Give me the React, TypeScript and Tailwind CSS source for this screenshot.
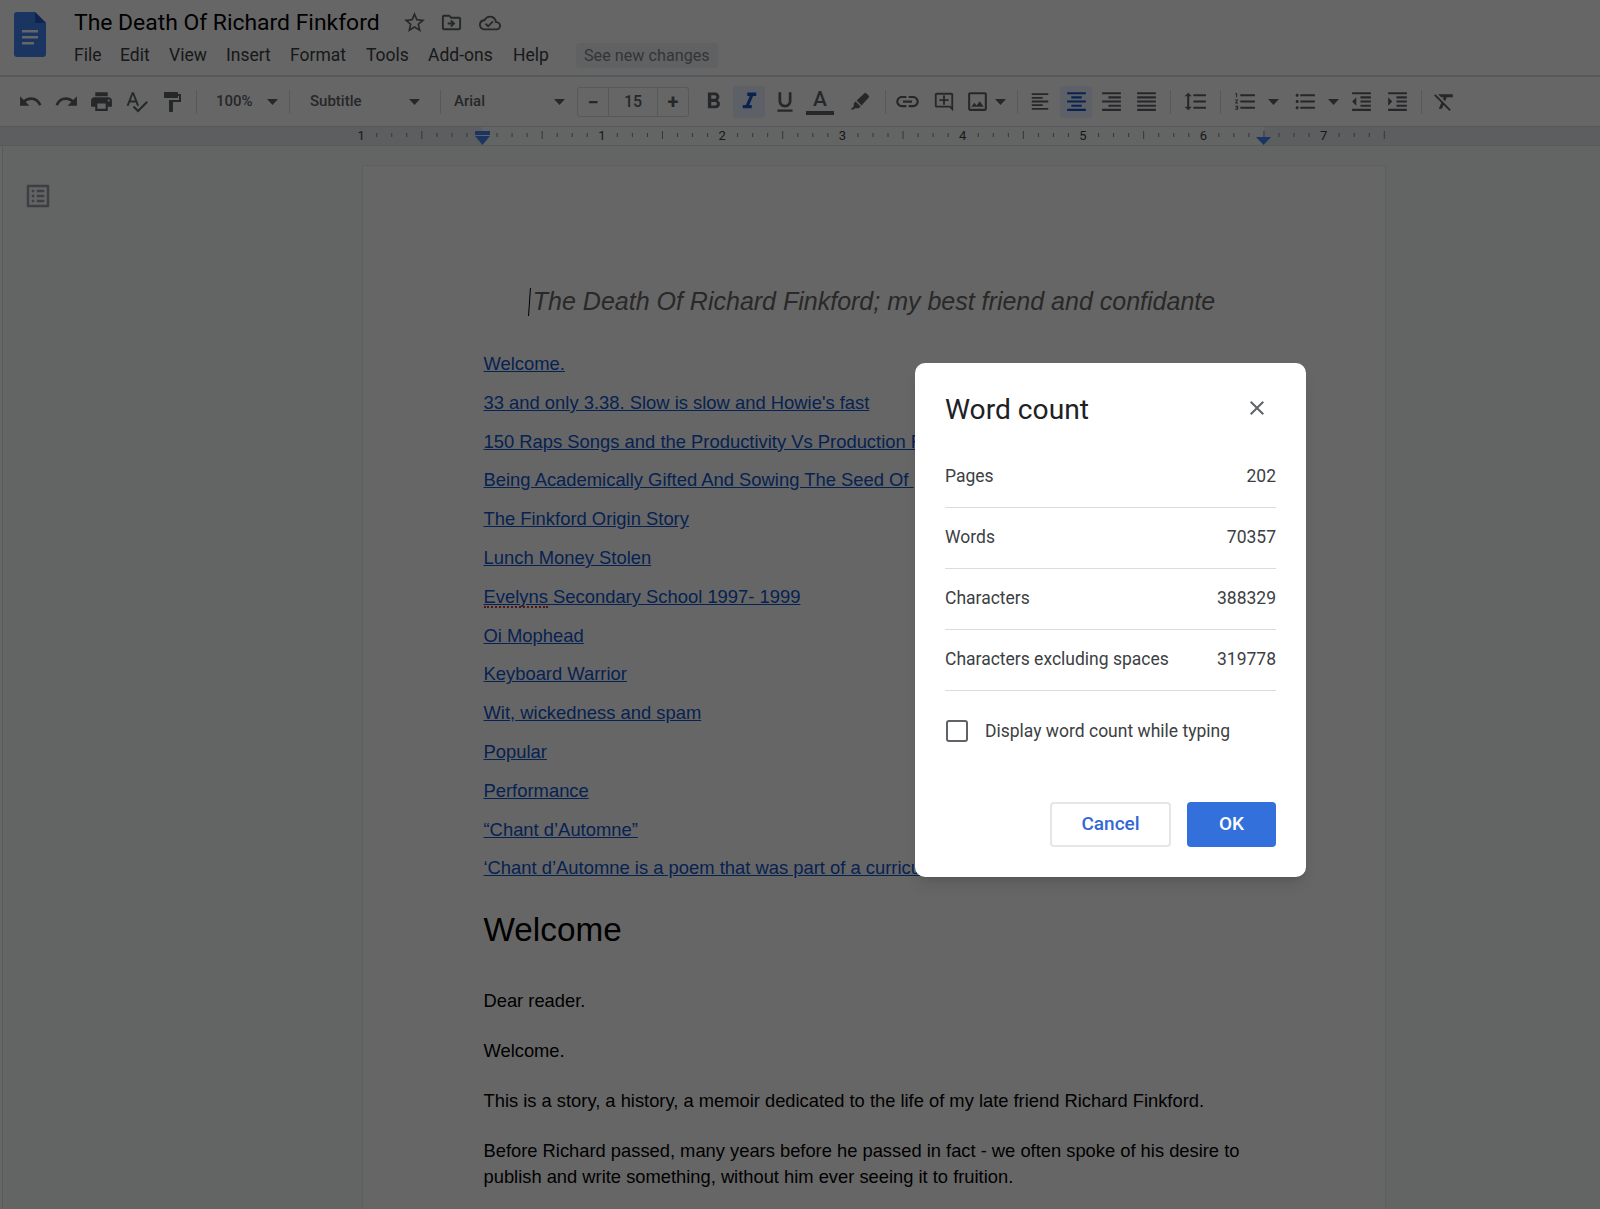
import React from "react";
import {
  MdUndo,
  MdRedo,
  MdPrint,
  MdSpellcheck,
  MdFormatPaint,
  MdFormatBold,
  MdFormatItalic,
  MdFormatUnderlined,
  MdLink,
  MdOutlineAddComment,
  MdOutlineImage,
  MdFormatAlignLeft,
  MdFormatAlignCenter,
  MdFormatAlignRight,
  MdFormatAlignJustify,
  MdFormatLineSpacing,
  MdFormatListNumbered,
  MdFormatListBulleted,
  MdFormatIndentDecrease,
  MdFormatIndentIncrease,
  MdFormatClear,
  MdStarBorder,
  MdOutlineDriveFileMove,
  MdOutlineCloudDone,
  MdOutlineListAlt,
  MdClose,
} from "react-icons/md";

const menus = [
  { label: "File", cls: "w-[46px]" },
  { label: "Edit", cls: "w-[49px]" },
  { label: "View", cls: "w-[57px]" },
  { label: "Insert", cls: "w-[64px]" },
  { label: "Format", cls: "w-[76px]" },
  { label: "Tools", cls: "w-[62px]" },
  { label: "Add-ons", cls: "w-[85px]" },
  { label: "Help", cls: "w-[62px]" },
];

const links = [
  "Welcome.",
  "33 and only 3.38. Slow is slow and Howie's fast",
  "150 Raps Songs and the Productivity Vs Production F",
  "Being Academically Gifted And Sowing The Seed Of\u00a0",
  "The Finkford Origin Story",
  "Lunch Money Stolen",
  "Evelyns Secondary School 1997- 1999",
  "Oi Mophead",
  "Keyboard Warrior",
  "Wit, wickedness and spam",
  "Popular",
  "Performance",
  "“Chant d’Automne”",
  "‘Chant d’Automne is a poem that was part of a curriculum",
];

const counts = [
  { label: "Pages", value: "202" },
  { label: "Words", value: "70357" },
  { label: "Characters", value: "388329" },
  { label: "Characters excluding spaces", value: "319778" },
];

const Slot = ({ className, children }: { className: string; children?: React.ReactNode }) => (
  <div className={`flex h-full shrink-0 items-center justify-center text-[#5f6368] ${className}`}>{children}</div>
);

const Caret = () => (
  <svg width="11" height="6" viewBox="0 0 11 6" className="shrink-0">
    <path d="M0 0h11L5.5 6z" fill="#5f6368" />
  </svg>
);

const Sep = ({ className }: { className: string }) => (
  <div className={`flex h-full shrink-0 items-center justify-center ${className}`}>
    <div className="h-[24px] w-px bg-[#dadce0]" />
  </div>
);

const Marker = () => (
  <svg width="24" height="24" viewBox="0 0 24 24" fill="#5f6368">
    <path d="M16.5 3.2a1.2 1.2 0 0 1 1.7 0l2.6 2.6a1.2 1.2 0 0 1 0 1.7l-7.3 7.9-4.9-4.9z" />
    <path d="M7.6 11.4l5 5-1.9 1.9H6.9l-1 1.2H2.6l3.2-3.3v-2.9z" />
  </svg>
);

const Ruler = () => {
  const inch = 120.3;
  const zero = 482;
  const labels = [-1, 1, 2, 3, 4, 5, 6, 7];
  const ticks: { x: number; long: boolean }[] = [];
  for (let i = -1; i < 8; i++) {
    for (let j = 1; j < 8; j++) {
      const x = zero + i * inch + (j * inch) / 8;
      if (x < 1386) ticks.push({ x, long: j === 4 });
    }
  }
  return (
    <svg width="1600" height="18" className="block">
      <rect x="0" y="0" width="1600" height="18" fill="#e8eaed" />
      <rect x="482" y="0" width="782" height="18" fill="#f8f9fa" />
      {ticks.map((t, i) => (
        <line key={i} x1={t.x} x2={t.x} y1={t.long ? 4 : 6} y2={t.long ? 12 : 10} stroke="#80868b" strokeWidth="1" />
      ))}
      {labels.map((n) => (
        <text
          key={n}
          x={zero + n * inch - 0.5}
          y="12.5"
          textAnchor="middle"
          fontSize="13"
          fontFamily="Roboto, sans-serif"
          fill="#3c4043"
        >
          {Math.abs(n)}
        </text>
      ))}
      <rect x="475" y="4" width="15" height="4" fill="#4285f4" />
      <path d="M475 9h15l-7.5 9z" fill="#4285f4" />
      <path d="M1256 10h15l-7.5 8z" fill="#4285f4" />
    </svg>
  );
};

const DocsLogo = () => (
  <svg width="32" height="45" viewBox="0 0 32 45">
    <path d="M3 0h18l11 11v31a3 3 0 0 1-3 3H3a3 3 0 0 1-3-3V3a3 3 0 0 1 3-3z" fill="#4285f4" />
    <path d="M21 0l11 11H21z" fill="#2a56c6" />
    <rect x="8" y="18" width="16" height="2.5" fill="#fff" />
    <rect x="8" y="24" width="16" height="2.5" fill="#fff" />
    <rect x="8" y="30" width="12" height="2.5" fill="#fff" />
  </svg>
);

const Header = () => (
  <div className="flex h-[75px] bg-white">
    <div className="w-[74px] shrink-0 pl-[14px] pt-[12px]">
      <DocsLogo />
    </div>
    <div className="flex flex-col">
      <div className="flex h-[45px] items-center">
        <span className="text-[22.9px] leading-[30px] text-black">The Death Of Richard Finkford</span>
        <div className="ml-[22px] flex items-center gap-[13px] text-[#5f6368]">
          <MdStarBorder size={25} />
          <MdOutlineDriveFileMove size={23} className="mr-[3px]" />
          <MdOutlineCloudDone size={22} />
        </div>
      </div>
      <div className="-mt-px flex h-[23px] items-center text-[17.5px] text-[#3c4043]">
        {menus.map((m) => (
          <span key={m.label} className={`block ${m.cls}`}>
            {m.label}
          </span>
        ))}
        <span className="ml-px rounded-[4px] bg-[#f1f3f4] px-[8px] py-[2px] text-[16.2px] leading-[21px] text-[#80868b]">
          See new changes
        </span>
      </div>
    </div>
  </div>
);

const Toolbar = () => (
  <div className="flex h-[49px] items-center bg-white pl-[12px]">
    <Slot className="w-[36px]"><MdUndo size={25} /></Slot>
    <Slot className="w-[36px]"><MdRedo size={25} /></Slot>
    <Slot className="w-[35px]"><MdPrint size={25} /></Slot>
    <Slot className="w-[35px]"><MdSpellcheck size={25} /></Slot>
    <Slot className="w-[35px]"><MdFormatPaint size={24} /></Slot>
    <Sep className="w-[14px]" />
    <div className="flex h-full w-[79px] shrink-0 items-center pl-[13px] text-[15px] font-medium text-[#5f6368]">
      <span className="w-[51px]">100%</span>
      <Caret />
    </div>
    <Sep className="w-[14px]" />
    <div className="flex h-full w-[137px] shrink-0 items-center pl-[14px] text-[15px] font-medium text-[#5f6368]">
      <span className="w-[99px]">Subtitle</span>
      <Caret />
    </div>
    <Sep className="w-[14px]" />
    <div className="flex h-full w-[124px] shrink-0 items-center pl-[7px] text-[15px] font-medium text-[#5f6368]">
      <span className="w-[100px]">Arial</span>
      <Caret />
    </div>
    <div className="ml-[6px] flex h-[30px] w-[112px] shrink-0 items-stretch rounded-[3px] border border-[#dadce0] text-[#5f6368]">
      <div className="flex w-[30px] items-center justify-center text-[20px] font-bold leading-none">−</div>
      <div className="flex flex-1 items-center justify-center border-x border-[#dadce0] text-[16px] font-medium">15</div>
      <div className="flex w-[30px] items-center justify-center text-[20px] font-bold leading-none">+</div>
    </div>
    <Slot className="ml-[6px] w-[37px]"><MdFormatBold size={27} /></Slot>
    <div className="ml-px flex h-[32px] w-[32px] shrink-0 items-center justify-center rounded-[3px] bg-[#e8f0fe] text-[#1a56c9]">
      <MdFormatItalic size={27} />
    </div>
    <Slot className="w-[40px]"><MdFormatUnderlined size={26} /></Slot>
    <Slot className="w-[30px]">
      <div className="flex flex-col items-center">
        <span className="text-[21px] font-medium leading-[23px]">A</span>
        <div className="h-[4px] w-[28px] bg-[#5f6368]" />
      </div>
    </Slot>
    <Slot className="w-[49px]"><Marker /></Slot>
    <Sep className="w-[2px]" />
    <Slot className="w-[42px]"><MdLink size={27} /></Slot>
    <Slot className="w-[32px]"><MdOutlineAddComment size={22} /></Slot>
    <Slot className="w-[35px]"><MdOutlineImage size={25} /></Slot>
    <Slot className="w-[10px]"><Caret /></Slot>
    <Sep className="w-[24px]" />
    <Slot className="w-[22px]"><MdFormatAlignLeft size={25} /></Slot>
    <div className="ml-[9px] flex h-[32px] w-[32px] shrink-0 items-center justify-center rounded-[3px] bg-[#e8f0fe] text-[#1a56c9]">
      <MdFormatAlignCenter size={25} />
    </div>
    <Slot className="w-[39px]"><MdFormatAlignRight size={25} /></Slot>
    <Slot className="w-[31px]"><MdFormatAlignJustify size={25} /></Slot>
    <Sep className="w-[16px]" />
    <Slot className="w-[34px]"><MdFormatLineSpacing size={25} /></Slot>
    <Sep className="w-[16px]" />
    <Slot className="w-[34px]"><MdFormatListNumbered size={25} /></Slot>
    <Slot className="w-[22px]"><Caret /></Slot>
    <Slot className="w-[42px]"><MdFormatListBulleted size={25} /></Slot>
    <Slot className="w-[14px]"><Caret /></Slot>
    <Slot className="w-[42px]"><MdFormatIndentDecrease size={25} /></Slot>
    <Slot className="w-[30px]"><MdFormatIndentIncrease size={25} /></Slot>
    <Sep className="w-[18px]" />
    <Slot className="w-[28px]"><MdFormatClear size={25} /></Slot>
  </div>
);

const DocPage = () => (
  <div className="h-[1100px] w-[1024px] shrink-0 border-x border-t border-[#ebebeb] bg-white pl-[120.5px] pr-[120.5px] pt-[115px] font-['Liberation_Sans',Arial,sans-serif]">
    <div className="h-[40px] whitespace-nowrap text-center text-[25px] italic leading-[40px] text-[#666666]">
      <span className="relative">
        <span className="absolute -left-[4px] top-[1px] h-[28px] w-px rotate-[4deg] bg-black" />
        The Death Of Richard Finkford; my best friend and confidante
      </span>
    </div>
    <div className="mt-[24px]">
      {links.map((text) => (
        <div key={text} className="h-[38.8px] whitespace-nowrap text-[18.4px] leading-[38.8px] text-[#1155cc] underline">
          {text.startsWith("Evelyns") ? (
            <>
              <span className="relative">
                Evelyns
                <span className="absolute bottom-[-1px] left-0 right-0 border-b-2 border-dotted border-[#d93025]" />
              </span>
              {text.slice(7)}
            </>
          ) : (
            text
          )}
        </div>
      ))}
    </div>
    <div className="mt-[17px] h-[50px] text-[33.3px] leading-[50px] text-black">Welcome</div>
    <div className="mt-[33px] flex flex-col gap-[24.5px] text-[18.33px] leading-[25.5px] text-black">
      <p>Dear reader.</p>
      <p>Welcome.</p>
      <p>This is a story, a history, a memoir dedicated to the life of my late friend Richard Finkford.</p>
      <p>
        Before Richard passed, many years before he passed in fact - we often spoke of his desire to publish and write
        something, without him ever seeing it to fruition.
      </p>
    </div>
  </div>
);

const WordCountDialog = () => (
  <div className="absolute left-[915px] top-[363px] flex h-[514px] w-[391px] flex-col rounded-[10px] bg-white px-[30px] shadow-lg">
    <div className="flex h-[84px] items-center justify-between pt-[11px]">
      <span className="text-[28.2px] leading-none text-[#202124]">Word count</span>
      <MdClose size={24} className="mr-[7px] mt-[-5px] text-[#5f6368]" />
    </div>
    {counts.map((row) => (
      <div
        key={row.label}
        className="flex h-[61px] items-center justify-between border-b border-[#dadce0] pb-[2px] text-[17.5px] text-[#3c4043] first:h-[62px]"
      >
        <span>{row.label}</span>
        <span>{row.value}</span>
      </div>
    ))}
    <div className="mt-[29px] flex h-[22px] items-center">
      <div className="ml-px h-[22px] w-[22px] rounded-[3px] border-2 border-[#5f6368]" />
      <span className="ml-[17px] text-[17.5px] text-[#3c4043]">Display word count while typing</span>
    </div>
    <div className="mt-[60px] flex justify-end gap-[16px]">
      <button className="h-[45px] w-[121px] rounded-[4px] border-2 border-[#e4e6e9] bg-white text-[19px] font-medium text-[#3367d6]">
        Cancel
      </button>
      <button className="h-[45px] w-[89px] rounded-[4px] bg-[#3370dc] text-[19px] font-medium text-white">OK</button>
    </div>
  </div>
);

export default function App() {
  return (
    <div className="relative h-screen w-full overflow-hidden bg-[#f8f9fa] font-['Roboto',sans-serif]">
      <Header />
      <div className="h-[2px] bg-[#dadce0]" />
      <Toolbar />
      <div className="border-y border-[#dadce0]">
        <Ruler />
      </div>
      <div className="flex">
        <div className="w-[3px] shrink-0 self-stretch border-r border-[#e0e0e0] bg-white" />
        <div className="w-[359px] shrink-0 pl-[20px] pt-[35px] text-[#9aa0a6]">
          <MdOutlineListAlt size={30} />
        </div>
        <div className="pt-[19px]">
          <DocPage />
        </div>
      </div>
      <div className="absolute inset-0 bg-black/60" />
      <WordCountDialog />
    </div>
  );
}
